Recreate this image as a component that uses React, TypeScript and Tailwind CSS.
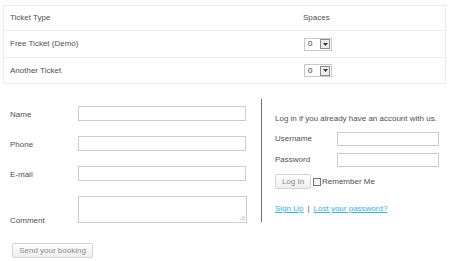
const Select: React.FC = () => {
    return (
        <div className="inline-flex items-center w-[28px] h-[13px] border border-[#c8c8c8] bg-white">
            <span className="pl-[3px] flex-1 text-[8px] leading-none text-[#333]">0</span>
            <span className="w-[10px] h-[10px] mr-[1px] border border-[#8a8a8a] bg-[#eeeeee] flex items-center justify-center">
                <svg width="5" height="3" viewBox="0 0 5 3"><path d="M0 0h5L2.5 3z" fill="#333" /></svg>
            </span>
        </div>
    )
}

const Field: React.FC<{ label: string }> = ({ label }) => {
    return (
        <div className="flex items-center">
            <span className="w-[68px] translate-y-[1px]">{label}</span>
            <div className="w-[168px] h-[15px] border border-[#cccccc] bg-white"></div>
        </div>
    )
}

const App: React.FC = () => {
    return (
        <div className="w-[450px] h-[261px] bg-white overflow-hidden font-['Liberation_Sans',Arial,sans-serif] text-[8px] text-[#4f4f4f]">
            <div className="pt-[5px] pl-[3px]">
                <div className="w-[443px] border border-[#ececec]">
                    <div className="flex items-center h-[25px] border-b border-[#ececec]">
                        <div className="w-[299px] pl-[6px]">Ticket Type</div>
                        <div>Spaces</div>
                    </div>
                    <div className="flex items-center h-[27px] border-b border-[#ececec]">
                        <div className="w-[300px] pl-[6px]">Free Ticket (Demo)</div>
                        <Select />
                    </div>
                    <div className="flex items-center h-[25px]">
                        <div className="w-[300px] pl-[6px]">Another Ticket</div>
                        <Select />
                    </div>
                </div>
            </div>

            <div className="flex">
                <div className="w-[261px] pl-[10px] pt-[22px]">
                    <div className="flex flex-col gap-[15px]">
                        <Field label="Name" />
                        <Field label="Phone" />
                        <Field label="E-mail" />
                        <div className="flex items-end">
                            <span className="w-[68px] leading-[9px] mb-[-2px]">Comment</span>
                            <div className="relative w-[169px] h-[27px] border border-[#cccccc] bg-white">
                                <svg className="absolute right-[1px] bottom-[1px]" width="6" height="6" viewBox="0 0 6 6">
                                    <path d="M5.5 1L1 5.5M5.5 3.5L3.5 5.5" stroke="#aaa" strokeWidth="0.8" />
                                </svg>
                            </div>
                        </div>
                    </div>
                    <button className="mt-[20px] ml-[2px] w-[81px] h-[15px] border border-[#d4d4d4] rounded-[2px] bg-gradient-to-b from-white to-[#efefef] text-[8px] text-[#888] leading-none">
                        Send your booking
                    </button>
                </div>

                <div className="w-[1px] h-[123px] mt-[15px] bg-[#6f6f6f]"></div>

                <div className="pl-[13px] pt-[30px]">
                    <div className="leading-[10px]">Log in if you already have an account with us.</div>
                    <div className="flex flex-col gap-[7px] mt-[8px]">
                        <div className="flex items-center">
                            <span className="w-[62px]">Username</span>
                            <div className="w-[102px] h-[14px] border border-[#cccccc] bg-white"></div>
                        </div>
                        <div className="flex items-center">
                            <span className="w-[62px]">Password</span>
                            <div className="w-[102px] h-[14px] border border-[#cccccc] bg-white"></div>
                        </div>
                    </div>
                    <div className="flex items-center mt-[7px]">
                        <button className="w-[36px] h-[15px] border border-[#d4d4d4] rounded-[2px] bg-gradient-to-b from-white to-[#efefef] text-[8px] text-[#888] leading-none">
                            Log In
                        </button>
                        <span className="ml-[2px] w-[8px] h-[8px] border border-[#777] bg-[#f4f4f4]"></span>
                        <span className="ml-[1px]">Remember Me</span>
                    </div>
                    <div className="flex items-center mt-[14px]">
                        <a className="text-[#3ab0e0] underline">Sign Up</a>
                        <span className="mx-[4px]">|</span>
                        <a className="text-[#3ab0e0] underline">Lost your password?</a>
                    </div>
                </div>
            </div>
        </div>
    )
}

export default App;
